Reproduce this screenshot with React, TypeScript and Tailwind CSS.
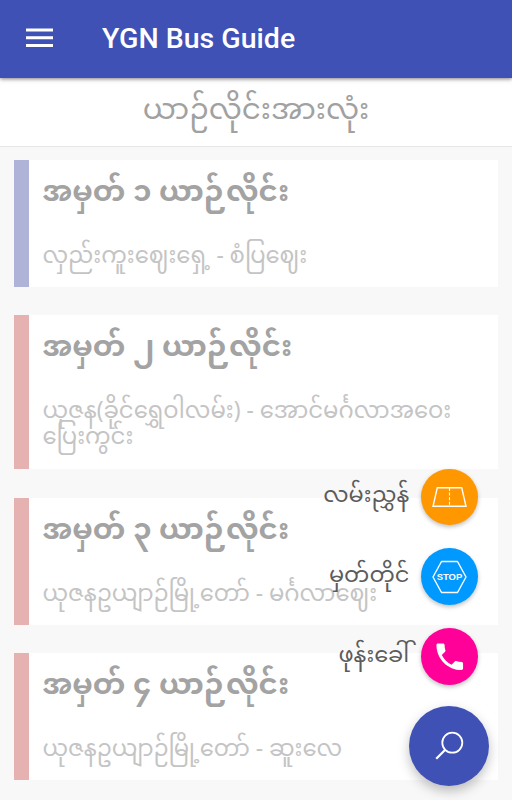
import React from 'react';

type Route = {
  name: string;
  stops: string;
  bar: string;
  height: string;
};

const routes: Route[] = [
  { name: 'အမှတ် ၁ ယာဉ်လိုင်း', stops: 'လှည်းကူးဈေးရှေ့ - စံပြဈေး', bar: 'bg-[#afb3d7]', height: 'h-[127px]' },
  { name: 'အမှတ် ၂ ယာဉ်လိုင်း', stops: 'ယုဇန(ခိုင်ရွှေဝါလမ်း) - အောင်မင်္ဂလာအဝေး\nပြေးကွင်း', bar: 'bg-[#e6b1b1]', height: 'h-[154px]' },
  { name: 'အမှတ် ၃ ယာဉ်လိုင်း', stops: 'ယုဇနဥယျာဉ်မြို့တော် - မင်္ဂလာဈေး', bar: 'bg-[#e6b1b1]', height: 'h-[127px]' },
  { name: 'အမှတ် ၄ ယာဉ်လိုင်း', stops: 'ယုဇနဥယျာဉ်မြို့တော် - ဆူးလေ', bar: 'bg-[#e6b1b1]', height: 'h-[127px]' },
];

const RoadIcon = () => (
  <svg width="36" height="22" viewBox="0.5 0 36 22" fill="none" stroke="white" strokeWidth="1.4">
    <path d="M5.8 1.7H30.2L34.5 20.3H1.5Z" />
    <path d="M18 2V20" strokeWidth="1.1" strokeDasharray="3 1.6" />
  </svg>
);

const StopIcon = () => (
  <svg width="36" height="34" viewBox="0.5 0 36 34" fill="none">
    <path d="M10 1.5H26L34.5 17L26 32.5H10L1.5 17Z" stroke="white" strokeWidth="1.4" strokeLinejoin="round" />
    <text x="18" y="20.4" textAnchor="middle" fill="white" fontFamily="Liberation Sans, sans-serif" fontSize="9.5" fontWeight="bold">
      STOP
    </text>
  </svg>
);

const PhoneIcon = () => (
  <svg width="35.5" height="35.5" viewBox="0 0 24 24" fill="white">
    <path d="M6.62 10.79c1.44 2.83 3.76 5.14 6.59 6.59l2.2-2.2c.27-.27.67-.36 1.02-.24 1.12.37 2.33.57 3.57.57.55 0 1 .45 1 1V20c0 .55-.45 1-1 1-9.39 0-17-7.61-17-17 0-.55.45-1 1-1h3.5c.55 0 1 .45 1 1 0 1.25.2 2.45.57 3.57.11.35.03.74-.25 1.02l-2.2 2.2z" />
  </svg>
);

const SearchIcon = () => (
  <svg width="30" height="30" viewBox="0 0 30 30" fill="none" stroke="white">
    <circle cx="18.3" cy="11.7" r="10" strokeWidth="1.8" />
    <path d="M11.2 18.8L2.2 27.8" strokeWidth="2.2" />
  </svg>
);

const actions = [
  { label: 'လမ်းညွှန်', color: 'bg-[#ff9800]', icon: <RoadIcon /> },
  { label: 'မှတ်တိုင်', color: 'bg-[#0099ff]', icon: <StopIcon /> },
  { label: 'ဖုန်းခေါ်', color: 'bg-[#ff0099]', icon: <PhoneIcon /> },
];

const RouteCard: React.FC<{ route: Route }> = ({ route }) => (
  <section className={`flex shrink-0 bg-white ${route.height}`}>
    <div className={`w-[14.5px] shrink-0 ${route.bar}`} />
    <div className="min-w-0 flex-1 pl-[14px] pt-[14px]">
      <h2 className="text-[29.4px] leading-[40px] font-bold whitespace-nowrap text-[#a3a3a3]">{route.name}</h2>
      <p className="mt-[31px] text-[22.75px] leading-[26px] whitespace-pre text-[#c4c4c4]">{route.stops}</p>
    </div>
  </section>
);

export default function App() {
  return (
    <div className="relative h-[800px] w-[512px] overflow-hidden bg-[#f8f8f8] font-['Noto_Sans_Myanmar','Liberation_Sans',sans-serif]">
      <header className="relative flex h-[78px] items-center bg-[#3f51b5] pl-[26px] shadow-[0_1px_4px_rgba(0,0,0,0.5)]">
        <svg className="mb-[3px]" width="27" height="20" viewBox="0 0 27 20" fill="white">
          <path d="M0 .5h27v3H0zM0 8.2h27v3H0zM0 15.9h27v3H0z" />
        </svg>
        <h1 className="ml-[49px] pt-px font-['Roboto',sans-serif] text-[28.5px] font-medium text-white">YGN Bus Guide</h1>
      </header>

      <div className="flex h-[69px] items-center justify-center border-b border-[#e6e6e6] bg-white text-[29.4px] leading-[40px] text-[#a1a1a1]">
        ယာဉ်လိုင်းအားလုံး
      </div>

      <main className="flex flex-col gap-[28.4px] px-[14px] pt-[13px]">
        {routes.map((route) => (
          <RouteCard key={route.name} route={route} />
        ))}
      </main>

      {/* speed dial over the list */}
      <div className="absolute right-[23px] bottom-[14px] flex flex-col items-end">
        <div className="mr-[11px] mb-[21.5px] flex flex-col items-end gap-[23px]">
          {actions.map((action) => (
            <div key={action.label} className="flex items-center">
              <span className="mr-[12px] pt-[1px] text-[22.5px] leading-[34px] whitespace-nowrap text-[#5c5c5c]">{action.label}</span>
              <button className={`flex size-[56.7px] items-center justify-center rounded-full shadow-[0_2px_4px_rgba(0,0,0,0.25)] ${action.color}`}>
                {action.icon}
              </button>
            </div>
          ))}
        </div>
        <button className="flex size-[79.8px] items-center justify-center rounded-full bg-[#3f51b5] shadow-[0_5px_12px_rgba(0,0,0,0.25)]">
          <SearchIcon />
        </button>
      </div>
    </div>
  );
}
